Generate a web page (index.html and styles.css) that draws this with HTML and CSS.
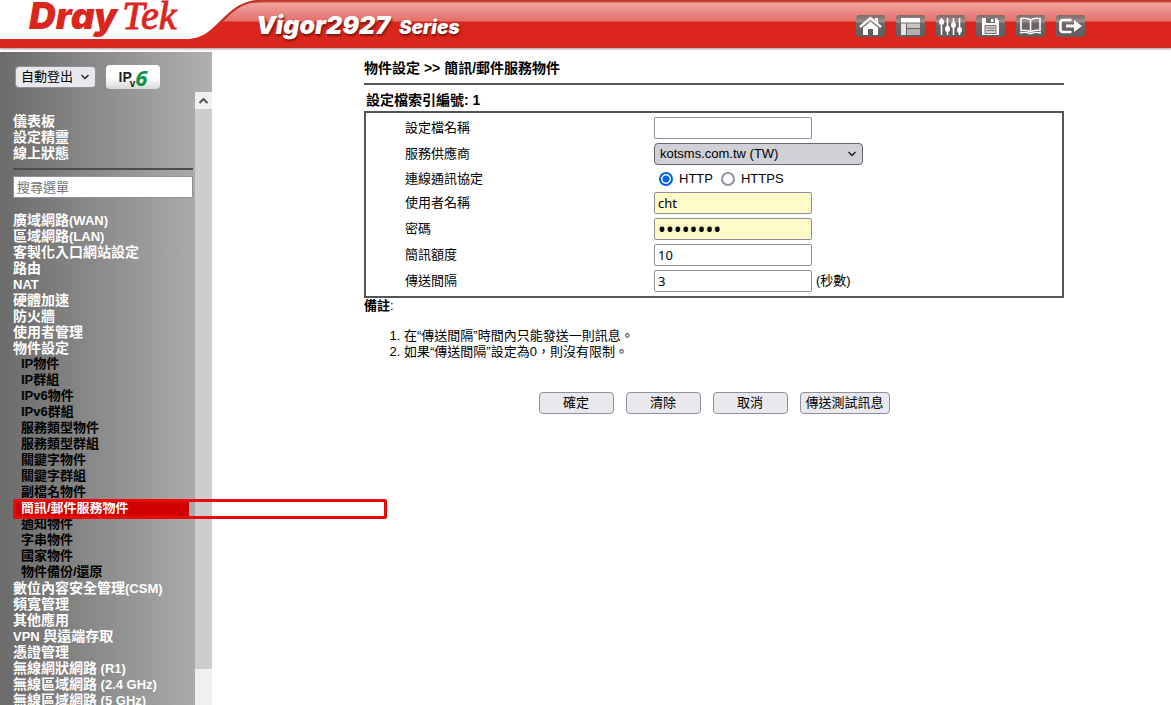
FILE: index.html
```html
<!DOCTYPE html>
<html lang="zh-Hant">
<head>
    <meta charset="UTF-8">
    <meta name="viewport" content="width=device-width, initial-scale=1.0">
    <title>Vigor2927 Series</title>
    <link rel="stylesheet" href="styles.css">
</head>
<body>
    <header class="header">
        <svg class="swoosh" width="260" height="48" viewBox="0 0 260 48" aria-hidden="true">
            <path d="M0 0H260C243 0 232 9 222 19C211 30 203 39 186 39H0Z" fill="#fff"/>
            <path d="M260 1C244 1 234 9 225 18L221 22" fill="none" stroke="#bb3127" stroke-width="2"/>
        </svg>
        <a class="logo" href="#"><span class="logo-dray">Dray</span><span class="logo-tek">Tek</span></a>
        <div class="model">Vigor2927 <span class="series">Series</span></div>
        <nav class="tools">
            <a href="#" aria-label="Home"><svg width="29" height="22" viewBox="0 0 29 22"><path d="M4 12L14.5 3L25 12" fill="none" stroke="#fff" stroke-width="2.4"/><path d="M19 3h3v5l-3-3z" fill="#fff"/><path d="M7 12.5L14.5 6.5L22 12.5V20H17V14H12V20H7Z" fill="#fff"/></svg></a>
            <a href="#" aria-label="Dashboard"><svg width="29" height="22" viewBox="0 0 29 22"><path d="M5 3H24V7.500H5Z" fill="#fff"/><path d="M5 8.500H10V20H5Z" fill="#e6e6e6"/><path d="M11 8.500H24V13H11Z" fill="#c9c5c5"/><path d="M11 14H24V20H11Z" fill="#b4b0b0"/></svg></a>
            <a href="#" aria-label="Settings"><svg width="29" height="22" viewBox="0 0 29 22"><path d="M5.500 3V20M11.500 3V20M17.500 3V20M23.500 3V20" stroke="#fff" stroke-width="1.600"/><g fill="#fff"><ellipse cx="5.500" cy="7" rx="2.500" ry="3"/><ellipse cx="11.500" cy="14" rx="2.500" ry="3"/><ellipse cx="17.500" cy="10" rx="2.500" ry="3"/><ellipse cx="23.500" cy="15" rx="2.500" ry="3"/></g></svg></a>
            <a href="#" aria-label="Save"><svg width="29" height="22" viewBox="0 0 29 22"><path d="M6 3H20L23 5.500V20H6Z" fill="#fff"/><path d="M10 3H19V8H10Z" fill="#726d6d"/><path d="M15 4H17.500V7H15Z" fill="#fff"/><path d="M9 10.500H20V18.500H9Z" fill="#d8d5d5" stroke="#726d6d"/><path d="M10.500 13H18.500M10.500 15.500H18.500" stroke="#726d6d"/></svg></a>
            <a href="#" aria-label="Manual"><svg width="29" height="22" viewBox="0 0 29 22"><path d="M14.500 5C12 3 8 3 5 3.500V15.500C8 15 12 15 14.500 17C17 15 21 15 24 15.500V3.500C21 3 17 3 14.500 5ZM14.500 5V17" fill="none" stroke="#fff" stroke-width="1.600"/><path d="M4 18C8 17 11 17 13 18.500H16C18 17 21 17 25 18" fill="none" stroke="#fff" stroke-width="1.300"/></svg></a>
            <a href="#" aria-label="Logout"><svg width="29" height="22" viewBox="0 0 29 22"><path d="M15.500 5H7Q4.500 5 4.500 7.500V14.500Q4.500 17 7 17H15.500" fill="none" stroke="#fff" stroke-width="2.600"/><path d="M10 9.500H18V5L26 11L18 17V12.500H10Z" fill="#fff"/></svg></a>
        </nav>
    </header>

    <div class="page">
        <aside class="sidebar">
            <div class="sidebar-top">
                <div class="select-wrap">
                    <select class="logout" aria-label="自動登出"><option>自動登出</option></select>
                    <svg class="caret" width="8" height="6" viewBox="0 0 8 6"><path d="M0.500 1L4 4.500L7.500 1" fill="none" stroke="#222" stroke-width="1.500"/></svg>
                </div>
                <button class="ipv6" type="button"><span class="ip">IP</span><span class="v">v</span><span class="six">6</span></button>
            </div>
            <div class="sidebar-body">
                <nav class="menu">
                    <ul>
                        <li><a href="#">儀表板</a></li>
                        <li><a href="#">設定精靈</a></li>
                        <li><a href="#">線上狀態</a></li>
                    </ul>
                    <hr>
                    <input class="search" type="text" placeholder="搜尋選單" aria-label="搜尋選單">
                    <ul>
                        <li><a href="#">廣域網路<span class="en">(WAN)</span></a></li>
                        <li><a href="#">區域網路<span class="en">(LAN)</span></a></li>
                        <li><a href="#">客製化入口網站設定</a></li>
                        <li><a href="#">路由</a></li>
                        <li><a href="#"><span class="en">NAT</span></a></li>
                        <li><a href="#">硬體加速</a></li>
                        <li><a href="#">防火牆</a></li>
                        <li><a href="#">使用者管理</a></li>
                        <li><a href="#">物件設定</a>
                            <ul class="submenu">
                                <li><a href="#">IP物件</a></li>
                                <li><a href="#">IP群組</a></li>
                                <li><a href="#">IPv6物件</a></li>
                                <li><a href="#">IPv6群組</a></li>
                                <li><a href="#">服務類型物件</a></li>
                                <li><a href="#">服務類型群組</a></li>
                                <li><a href="#">關鍵字物件</a></li>
                                <li><a href="#">關鍵字群組</a></li>
                                <li><a href="#">副檔名物件</a></li>
                                <li class="active"><a href="#">簡訊/郵件服務物件</a></li>
                                <li><a href="#">通知物件</a></li>
                                <li><a href="#">字串物件</a></li>
                                <li><a href="#">國家物件</a></li>
                                <li><a href="#">物件備份/還原</a></li>
                            </ul>
                        </li>
                        <li><a href="#">數位內容安全管理<span class="en">(CSM)</span></a></li>
                        <li><a href="#">頻寬管理</a></li>
                        <li><a href="#">其他應用</a></li>
                        <li><a href="#"><span class="en">VPN </span>與遠端存取</a></li>
                        <li><a href="#">憑證管理</a></li>
                        <li><a href="#">無線網狀網路<span class="en"> (R1)</span></a></li>
                        <li><a href="#">無線區域網路<span class="en"> (2.4 GHz)</span></a></li>
                        <li><a href="#">無線區域網路<span class="en"> (5 GHz)</span></a></li>
                    </ul>
                </nav>
                <div class="scrollbar">
                    <button class="scroll-up" type="button" aria-label="Scroll up"><svg width="9" height="6" viewBox="0 0 9 6"><path d="M0.500 5L4.500 1L8.500 5" fill="none" stroke="#505050" stroke-width="2"/></svg></button>
                    <div class="track"><div class="thumb"></div></div>
                </div>
            </div>
        </aside>

        <main class="content">
            <form class="profile">
                <h1>物件設定 &gt;&gt; 簡訊/郵件服務物件</h1>
                <h2>設定檔索引編號: 1</h2>
                <div class="fields">
                    <div class="row">
                        <label for="name">設定檔名稱</label>
                        <input class="text" type="text" id="name">
                    </div>
                    <div class="row">
                        <label for="provider">服務供應商</label>
                        <div class="select-wrap">
                            <select class="provider" id="provider"><option>kotsms.com.tw (TW)</option></select>
                            <svg class="caret" width="8" height="6" viewBox="0 0 8 6"><path d="M0.500 1L4 4.500L7.500 1" fill="none" stroke="#222" stroke-width="1.500"/></svg>
                        </div>
                    </div>
                    <div class="row row-radio" role="radiogroup" aria-label="連線通訊協定">
                        <span>連線通訊協定</span>
                        <div class="radios">
                            <input type="radio" name="proto" id="http" checked><label for="http">HTTP</label>
                            <input type="radio" name="proto" id="https"><label for="https">HTTPS</label>
                        </div>
                    </div>
                    <div class="row">
                        <label for="user">使用者名稱</label>
                        <input class="text filled" type="text" id="user" value="cht">
                    </div>
                    <div class="row">
                        <label for="pass">密碼</label>
                        <input class="text filled password" type="password" id="pass" value="password">
                    </div>
                    <div class="row">
                        <label for="quota">簡訊額度</label>
                        <input class="text" type="text" id="quota" value="10">
                    </div>
                    <div class="row">
                        <label for="interval">傳送間隔</label>
                        <input class="text" type="text" id="interval" value="3"><span class="unit">(秒數)</span>
                    </div>
                </div>
                <div class="note"><b>備註</b>:</div>
                <ol class="notes">
                    <li>在“傳送間隔”時間內只能發送一則訊息。</li>
                    <li>如果“傳送間隔”設定為0，則沒有限制。</li>
                </ol>
                <div class="buttons">
                    <button type="submit">確定</button>
                    <button type="button">清除</button>
                    <button type="button">取消</button>
                    <button type="button" class="wide">傳送測試訊息</button>
                </div>
            </form>
        </main>
    </div>
</body>
</html>
```
FILE: styles.css
```css
*,
*::after {
    box-sizing: border-box;
}

body {
    margin: 0;
    height: 100vh;
    overflow: hidden;
    display: flex;
    flex-direction: column;
    font-family: "Liberation Sans", "Noto Sans CJK TC", sans-serif;
    font-size: 13px;
    line-height: 16px;
    color: #000;
    background: #fff;
}

a {
    color: inherit;
    text-decoration: none;
}

ul {
    list-style: none;
    margin: 0;
    padding: 0;
}

input,
select,
button {
    font: inherit;
    color: inherit;
    margin: 0;
}

/* Header */
.header {
    position: relative;
    flex: none;
    display: flex;
    height: 48px;
    margin-bottom: 4px;
    background: linear-gradient(#b9352b 0, #c4483e 2px, #f0a39d 3px, #e4716a 21px, #da261c 22px, #da261c 46px, #c42a20 48px);
    box-shadow: 0 1px 2px #a88e88;
}

.swoosh {
    position: absolute;
    left: 0;
    top: 0;
}

.logo {
    position: relative;
    display: flex;
    align-items: baseline;
    gap: 5px;
    width: 228px;
    height: 40px;
    padding-left: 29px;
    color: #da261c;
    white-space: nowrap;
}

.logo-dray {
    font: italic 900 37px/32px Inter, sans-serif;
}

.logo-tek {
    font: italic 40px/32px "Liberation Serif", serif;
    -webkit-text-stroke: 1px #da261c;
}

.model {
    position: relative;
    padding-left: 28px;
    font: italic 900 25px/50px Inter, sans-serif;
    color: #fff;
    text-shadow: 1px 2px 2px #7a1610;
    white-space: nowrap;
}

.series {
    margin-left: 4px;
    font-size: 19px;
}

.tools {
    display: flex;
    gap: 11px;
    margin-left: auto;
    padding: 15px 86px 0 0;
}

.tools a {
    width: 29px;
    height: 22px;
    border-radius: 3px;
    background: linear-gradient(#7d6a69 0, #a08f8e 7px, #6c6666 8px, #625d5d 100%);
}

.tools svg {
    display: block;
}

/* Sidebar */
.page {
    flex: 1;
    min-height: 0;
    display: flex;
}

.sidebar {
    flex: none;
    width: 212px;
    display: flex;
    flex-direction: column;
    background: linear-gradient(to right, #6b6b6b, #b0b0b0);
}

.sidebar-top {
    flex: none;
    display: flex;
    align-items: center;
    gap: 10px;
    height: 40px;
    padding: 10px 0 0 15px;
}

.select-wrap {
    position: relative;
    display: flex;
}

.caret {
    position: absolute;
    right: 7px;
    top: 8px;
    pointer-events: none;
}

.logout,
.provider {
    appearance: none;
    height: 22px;
    padding: 0 5px;
    border: 1px solid #8f8f9d;
    border-radius: 4px;
    background: #e9e9ed;
}

.logout {
    width: 81px;
}

.ipv6 {
    display: flex;
    align-items: center;
    justify-content: center;
    width: 54px;
    height: 24px;
    padding: 0;
    border: none;
    border-radius: 4px;
    background: linear-gradient(#fff 50%, #d8d8d8);
    color: #222;
    font-weight: bold;
}

.ip {
    font-size: 14px;
}

.v {
    align-self: flex-end;
    margin-left: -2px;
    font-size: 10px;
    line-height: 10px;
}

.six {
    font: italic bold 22px/24px "Open Sans", sans-serif;
    color: #0a9347;
}

.sidebar-body {
    flex: 1;
    min-height: 0;
    display: flex;
}

.menu {
    flex: 1;
    padding: 21px 2px 0 13px;
    font-size: 14px;
    font-weight: bold;
    color: #fff;
    white-space: nowrap;
}

.menu a {
    display: block;
    height: 16px;
}

.menu .en {
    font-size: 13px;
    white-space: pre;
}

.menu hr {
    height: 2px;
    margin: 7px 0 6px;
    border: none;
    background: #4c4c4c;
}

.search {
    display: block;
    width: 100%;
    height: 22px;
    margin-bottom: 14px;
    padding: 0 3px;
    border: 1px solid #8f8f9d;
    background: #fff;
    font-size: 13px;
    font-weight: normal;
}

.search::placeholder {
    color: #757575;
}

.submenu {
    font-size: 13px;
    color: #000;
}

.submenu li {
    margin-right: 4px;
    padding-left: 8px;
}

.submenu .active {
    position: relative;
    background: #d00000;
    color: #fff;
}

/* red frame round the selected item */
.active::after {
    content: "";
    position: absolute;
    left: 0;
    top: -1px;
    width: 374px;
    height: 20px;
    border: 3px solid #e90a0a;
    border-radius: 2px;
    pointer-events: none;
    z-index: 2;
}

.scrollbar {
    flex: none;
    width: 17px;
    display: flex;
    flex-direction: column;
    background: #f0f0f0;
}

.scroll-up {
    height: 17px;
    padding: 0;
    border: none;
    background: #f0f0f0;
    display: flex;
    align-items: center;
    justify-content: center;
}

.track {
    flex: 1;
}

.thumb {
    height: 94%;
    background: #cdcdcd;
}

/* Content */
.content {
    flex: 1;
    padding: 8px 24px 0 152px;
}

.profile {
    max-width: 700px;
}

h1,
h2 {
    margin: 0;
    font-size: 14px;
    line-height: 16px;
}

h1 {
    padding-bottom: 7px;
    border-bottom: 2px solid #555;
}

h2 {
    padding: 7px 0 3px 2px;
}

.fields {
    border: 2px solid #555;
    padding: 2px 0;
}

.row {
    display: grid;
    grid-template-columns: 249px auto 1fr;
    align-items: center;
    height: 26px;
    padding-left: 39px;
}

.row-radio {
    height: 23px;
}

.text {
    width: 158px;
    height: 22px;
    padding: 0 3px;
    border: 1px solid #8f8f9d;
    border-radius: 2px;
    background: #fff;
    font-family: "Noto Sans", sans-serif;
}

.filled {
    background: #fffbc8;
}

.password {
    font-size: 21px;
}

.provider {
    width: 209px;
    border-color: #676774;
    background: #d0d0d7;
}

.unit {
    padding-left: 4px;
}

.radios {
    display: flex;
    align-items: center;
    padding-left: 5px;
}

.radios input {
    appearance: none;
    width: 14px;
    height: 14px;
    margin-right: 6px;
    border: 2px solid #8f8f9d;
    border-radius: 50%;
    background: #fff;
}

.radios input:checked {
    border-color: #0061e0;
    background: radial-gradient(circle, #0061e0 3px, #fff 4px);
}

.radios label {
    margin-right: 8px;
}

.notes {
    margin: 14px 0 32px;
    padding-left: 40px;
}

.buttons {
    display: flex;
    justify-content: center;
    gap: 12px;
}

.buttons button {
    width: 75px;
    height: 22px;
    padding: 0;
    border: 1px solid #8f8f9d;
    border-radius: 4px;
    background: #e9e9ed;
}

.buttons .wide {
    width: 90px;
}
```
